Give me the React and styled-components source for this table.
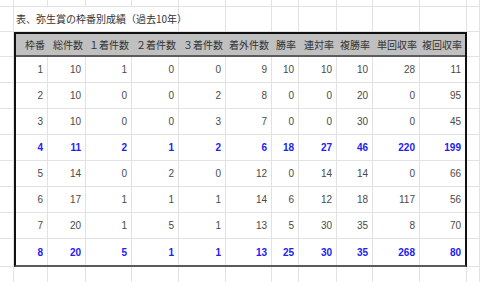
import styled, { createGlobalStyle } from 'styled-components';

const GlobalStyle = createGlobalStyle`
    html, body {
        margin: 0;
        padding: 0;
        background: #ffffff;
    }
    * {
        box-sizing: border-box;
    }
`;

const GRID = '#e2e2e2';

const Sheet = styled.div`
    width: 480px;
    height: 282px;
    overflow: hidden;
    display: grid;
    grid-template-columns: 14px 34px 38px 46px 47px 47px 46px 27px 38px 36px 47px 47px 1fr;
    grid-template-rows: 7px 25px 25px repeat(7, 26px) 28px 1fr;
    background: #ffffff;
`;

const Cell = styled.div`
    border-right: ${(p) => (p.$noRight ? 'none' : `1px solid ${GRID}`)};
    border-bottom: ${(p) => (p.$noBottom ? 'none' : `1px solid ${GRID}`)};
`;

const Title = styled.div`
    grid-column: span 4;
    border-right: 1px solid ${GRID};
    border-bottom: 1px solid ${GRID};
    display: flex;
    align-items: center;
    padding: 0 0 2px 2px;
    font-family: "Noto Sans CJK JP", sans-serif;
    font-size: 10px;
    color: #333333;
    white-space: nowrap;
`;

const Table = styled.div`
    grid-column: 2 / 13;
    grid-row: 3 / 12;
    display: grid;
    grid-template-columns: 32px 38px 46px 47px 47px 46px 27px 38px 36px 47px 45px;
    grid-template-rows: 23px repeat(8, 26px);
    border-top: 2px solid #111111;
    border-left: 2px solid #111111;
    border-right: 2px solid #111111;
    border-bottom: 2px solid #5a5a5a;
    background: #ffffff;
`;

const HeadCell = styled.div`
    background: #c0c0c0;
    border-bottom: 2px solid #5c5c5c;
    display: flex;
    align-items: center;
    justify-content: flex-end;
    padding-right: 3px;
    font-family: "Noto Sans CJK JP", sans-serif;
    font-size: 10px;
    color: #333333;
    white-space: nowrap;
`;

const DataCell = styled.div`
    border-right: ${(p) => (p.$lastCol ? 'none' : `1px solid ${GRID}`)};
    border-bottom: ${(p) => (p.$lastRow ? 'none' : `1px solid ${GRID}`)};
    display: flex;
    align-items: center;
    justify-content: flex-end;
    padding-right: 4px;
    font-family: "Liberation Sans", Arial, sans-serif;
    font-size: 10px;
    font-weight: ${(p) => (p.$hot ? 700 : 400)};
    color: ${(p) => (p.$hot ? '#2020f5' : '#4a4a4a')};
`;

const headers = ['枠番', '総件数', '１着件数', '２着件数', '３着件数', '着外件数', '勝率', '連対率', '複勝率', '単回収率', '複回収率'];

const rows = [
    { hot: false, values: [1, 10, 1, 0, 0, 9, 10, 10, 10, 28, 11] },
    { hot: false, values: [2, 10, 0, 0, 2, 8, 0, 0, 20, 0, 95] },
    { hot: false, values: [3, 10, 0, 0, 3, 7, 0, 0, 30, 0, 45] },
    { hot: true, values: [4, 11, 2, 1, 2, 6, 18, 27, 46, 220, 199] },
    { hot: false, values: [5, 14, 0, 2, 0, 12, 0, 14, 14, 0, 66] },
    { hot: false, values: [6, 17, 1, 1, 1, 14, 6, 12, 18, 117, 56] },
    { hot: false, values: [7, 20, 1, 5, 1, 13, 5, 30, 35, 8, 70] },
    { hot: true, values: [8, 20, 5, 1, 1, 13, 25, 30, 35, 268, 80] },
];

const blank = (n, key, props = {}) =>
    Array.from({ length: n }, (_, i) => <Cell key={`${key}-${i}`} {...props} />);

export default function App() {
    return (
        <>
            <GlobalStyle />
            <Sheet>
                {/* row 1 */}
                {blank(13, 'top')}

                {/* title row */}
                <Cell />
                <Title>表、弥生賞の枠番別成績（過去10年）</Title>
                {blank(8, 'title')}

                <Table>
                    {headers.map((h) => (
                        <HeadCell key={h}>{h}</HeadCell>
                    ))}
                    {rows.map((row, r) =>
                        row.values.map((v, c) => (
                            <DataCell
                                key={`${r}-${c}`}
                                $hot={row.hot}
                                $lastCol={c === row.values.length - 1}
                                $lastRow={r === rows.length - 1}
                            >
                                {v}
                            </DataCell>
                        ))
                    )}
                </Table>

                {/* side columns beside the table */}
                {Array.from({ length: 9 }, (_, i) => [
                    <Cell key={`a-${i}`} />,
                    <Cell key={`l-${i}`} />,
                ])}

                {/* bottom row */}
                {blank(13, 'bottom', { $noBottom: true })}
            </Sheet>
        </>
    );
}
